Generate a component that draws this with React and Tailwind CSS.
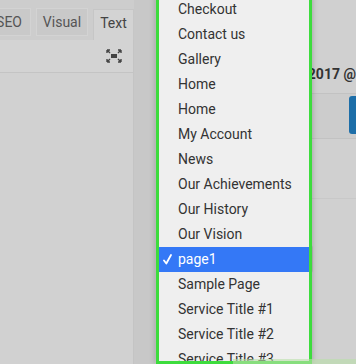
import React from 'react';

const pages = [
  'Checkout',
  'Contact us',
  'Gallery',
  'Home',
  'Home',
  'My Account',
  'News',
  'Our Achievements',
  'Our History',
  'Our Vision',
  'page1',
  'Sample Page',
  'Service Title #1',
  'Service Title #2',
  'Service Title #3',
];

const ExpandIcon = () => (
  <svg width="16" height="14" viewBox="0 0 16 14" fill="none" stroke="#444" strokeWidth="1.4">
    <rect x="5" y="5" width="6" height="4" fill="#444" stroke="none" />
    <path d="M1 1l3 3M1 1h3M1 1v3" />
    <path d="M15 1l-3 3M15 1h-3M15 1v3" />
    <path d="M1 13l3-3M1 13h3M1 13v-3" />
    <path d="M15 13l-3-3M15 13h-3M15 13v-3" />
  </svg>
);

// Dropdown listing pages, one selected
const PageDropdown = ({ selected }) => (
  <div className="absolute left-[156px] top-[-12px] w-[156px] h-[376px] border-[3px] border-[#3ddc3d] bg-[#efefef] shadow-[0_0_6px_rgba(0,0,0,0.25)] overflow-hidden">
    <div className="pt-[6px]">
      {pages.map((p, i) => {
        const active = p === selected;
        return (
          <div
            key={i}
            className={`h-[25px] flex items-center pl-[19px] relative text-[14px] ${active ? 'bg-[#3478f6] text-white' : 'text-[#333]'}`}
          >
            {active && (
              <svg className="absolute left-[4px] top-[7px]" width="9" height="11" viewBox="0 0 9 11" fill="none" stroke="white" strokeWidth="1.8" strokeLinecap="round" strokeLinejoin="round">
                <path d="M1 6.5l2.3 3L8 1" />
              </svg>
            )}
            {p}
          </div>
        );
      })}
    </div>
  </div>
);

export default function App() {
  return (
    <div className="w-[356px] h-[364px] relative overflow-hidden bg-[#cecece] font-['Roboto',sans-serif]">
      <div className="flex h-full">
        {/* editor panel */}
        <div className="w-[135px] flex flex-col">
          <div className="h-[40px] flex items-end gap-[5px] bg-[#cdcdcd]">
            <div className="w-[31px] h-[28px] mb-[4px] bg-[#c9c9c9] border border-[#d3d3d3] border-l-0 flex items-center justify-end pr-[8px] text-[14px] text-[#555]">SEO</div>
            <div className="w-[52px] h-[28px] mb-[4px] bg-[#c9c9c9] border border-[#d3d3d3] flex items-center justify-center text-[14px] text-[#555]">Visual</div>
            <div className="w-[41px] h-[31px] bg-[#d3d3d3] border border-[#c6c6c6] border-b-0 flex items-center justify-center text-[14px] text-[#444] pb-[3px]">Text</div>
          </div>
          <div className="h-[33px] bg-[#d3d3d3] border-r border-b border-[#c4c4c4] flex items-center justify-end pr-[11px]">
            <ExpandIcon />
          </div>
          <div className="flex-1 bg-[#d1d1d1] border-r border-[#c4c4c4]" />
        </div>
        <div className="w-[21px] bg-[#c8c8c8]" />
        <div className="w-[155px]" />
        {/* content to the right */}
        <div className="flex-1 flex flex-col bg-[#d0d0d0]">
          <div className="h-[93px] flex flex-col pl-[1px]">
            <div className="h-[64px] text-[#777] text-[11px] pt-[2px]">:</div>
            <div className="text-[14px] font-bold text-[#333] whitespace-nowrap">2017 @</div>
          </div>
          <div className="h-[45px] border-t border-[#c2c2c2] flex items-start justify-end pt-[2px] bg-[#cccccc]">
            <div className="w-[7px] h-[38px] bg-[#1d6ea8] rounded-l-[3px]" />
          </div>
          <div className="h-[60px] border-t border-[#c2c2c2]" />
          <div className="h-[60px] border-t border-[#c8c8c8] pt-[46px]">
            <div className="w-[6px] h-[28px] bg-[#bdbdbd] rounded-r-[3px]" />
          </div>
        </div>
      </div>
      <PageDropdown selected="page1" />
      <div className="absolute left-[233px] top-[359px] w-[130px] h-[10px] bg-[#b9e0a8]/60" />
    </div>
  );
}
